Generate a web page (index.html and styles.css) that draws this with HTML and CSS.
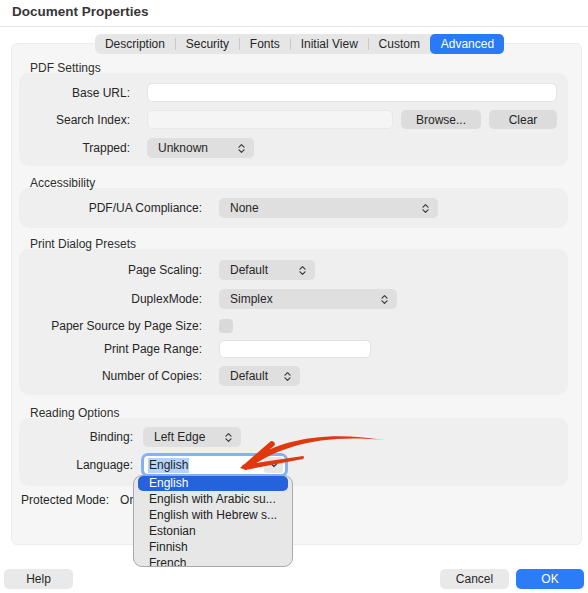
FILE: index.html
```html
<!DOCTYPE html>
<html>
<head>
<meta charset="utf-8">
<link rel="stylesheet" href="styles.css">
</head>
<body>
<div class="page">
  <header class="titlebar">Document Properties</header>

  <nav class="tabs-wrap">
    <div class="tabs">
      <span class="tab">Description</span>
      <span class="tab sep">Security</span>
      <span class="tab sep">Fonts</span>
      <span class="tab sep">Initial View</span>
      <span class="tab sep">Custom</span>
      <span class="tab active">Advanced</span>
    </div>
  </nav>

  <main class="panel">
    <div class="sec-title">PDF Settings</div>
    <section class="group g1">
      <div class="row">
        <label class="lbl">Base URL:</label>
        <div class="field white grow"></div>
      </div>
      <div class="row mt8">
        <label class="lbl">Search Index:</label>
        <div class="field dim w246"></div>
        <button class="btn w80">Browse...</button>
        <button class="btn w68">Clear</button>
      </div>
      <div class="row mt9">
        <label class="lbl">Trapped:</label>
        <div class="select w107"><span>Unknown</span><svg class="updown" viewBox="0 0 7 11"><path d="M1 4.2 3.5 1.6 6 4.2M1 6.8 3.5 9.4 6 6.8"/></svg></div>
      </div>
    </section>

    <div class="sec-title t2">Accessibility</div>
    <section class="group g2">
      <div class="row">
        <label class="lbl">PDF/UA Compliance:</label>
        <div class="select w219"><span>None</span><svg class="updown" viewBox="0 0 7 11"><path d="M1 4.2 3.5 1.6 6 4.2M1 6.8 3.5 9.4 6 6.8"/></svg></div>
      </div>
    </section>

    <div class="sec-title t3">Print Dialog Presets</div>
    <section class="group g3">
      <div class="row">
        <label class="lbl">Page Scaling:</label>
        <div class="select w96"><span>Default</span><svg class="updown" viewBox="0 0 7 11"><path d="M1 4.2 3.5 1.6 6 4.2M1 6.8 3.5 9.4 6 6.8"/></svg></div>
      </div>
      <div class="row mt9">
        <label class="lbl">DuplexMode:</label>
        <div class="select w178"><span>Simplex</span><svg class="updown" viewBox="0 0 7 11"><path d="M1 4.2 3.5 1.6 6 4.2M1 6.8 3.5 9.4 6 6.8"/></svg></div>
      </div>
      <div class="row mt8 h18">
        <label class="lbl">Paper Source by Page Size:</label>
        <div class="checkbox"></div>
      </div>
      <div class="row mt5 h18">
        <label class="lbl">Print Page Range:</label>
        <div class="field white w152 h18"></div>
      </div>
      <div class="row mt8">
        <label class="lbl">Number of Copies:</label>
        <div class="select w81"><span>Default</span><svg class="updown" viewBox="0 0 7 11"><path d="M1 4.2 3.5 1.6 6 4.2M1 6.8 3.5 9.4 6 6.8"/></svg></div>
      </div>
    </section>

    <div class="sec-title t4">Reading Options</div>
    <section class="group g4">
      <div class="row">
        <label class="lbl">Binding:</label>
        <div class="select w98"><span>Left Edge</span><svg class="updown" viewBox="0 0 7 11"><path d="M1 4.2 3.5 1.6 6 4.2M1 6.8 3.5 9.4 6 6.8"/></svg></div>
      </div>
      <div class="row mt9 h18">
        <label class="lbl">Language:</label>
        <div class="combo">
          <span class="seltext">English</span>
          <span class="combo-btn"><svg viewBox="0 0 8 6"><path d="M1 1.5 4 4.5 7 1.5"/></svg></span>
          <ul class="menu">
            <li class="hl">English</li>
            <li>English with Arabic su...</li>
            <li>English with Hebrew s...</li>
            <li>Estonian</li>
            <li>Finnish</li>
            <li>French</li>
          </ul>
        </div>
      </div>
    </section>

    <div class="protected"><span>Protected Mode:</span><span class="on">On</span></div>
  </main>

  <footer class="bottom">
    <button class="fbtn">Help</button>
    <div class="right">
      <button class="fbtn">Cancel</button>
      <button class="fbtn primary">OK</button>
    </div>
  </footer>

  <svg class="arrow" viewBox="0 0 588 593" width="588" height="593">
    <path d="M243 467 C264 446 312 428 384 440 C312 433 272 451 246 470 Z"/>
    <path d="M240 468 L271 441 Q275 441 275 445 L246 470 Z"/>
    <path d="M242 465 L303 456 Q305 457 303 459 L245 470 Z"/>
  </svg>
</div>
</body>
</html>
```

FILE: styles.css
```css
* { box-sizing: border-box; }
html, body { margin: 0; padding: 0; background: #ffffff; }
body {
  font-family: "Liberation Sans", Arial, sans-serif;
  font-size: 12px;
  color: #262626;
}
.page { position: relative; width: 588px; height: 593px; overflow: hidden; }

.titlebar {
  height: 27px;
  padding: 4px 0 0 12px;
  font-size: 13.5px;
  font-weight: bold;
  color: #363636;
  border-bottom: 1px solid #e4e4e4;
  line-height: 16px;
}

.tabs-wrap {
  display: flex;
  justify-content: center;
  margin: 7px 0 0 14px;
  width: 571px;
  position: relative;
  z-index: 2;
}
.tabs {
  display: flex;
  height: 20px;
  background: #e6e6e6;
  border-radius: 6px;
}
.tab {
  position: relative;
  padding: 0 10.4px;
  line-height: 20px;
  color: #262626;
}
.tab.sep::before {
  content: "";
  position: absolute;
  left: 0;
  top: 4px;
  width: 1px;
  height: 12px;
  background: #c9c9c9;
}
.tab.active {
  background: #2a7af5;
  color: #ffffff;
  border-radius: 5px;
}

.panel {
  position: relative;
  z-index: 1;
  margin: -11px 0 0 11px;
  width: 571px;
  height: 502px;
  background: #f6f6f6;
  border: 1px solid #ececec;
  border-radius: 6px;
  padding: 16px 13px 0 7px;
}

.sec-title {
  height: 13px;
  line-height: 17px;
  padding-left: 11px;
  color: #2e2e2e;
}
.t2 { margin-top: 9px; }
.t3 { margin-top: 8px; }
.t4 { margin-top: 10px; }

.group {
  background: #efefef;
  border-radius: 10px;
  padding-right: 11px;
}
.g1 { padding-top: 10px; padding-bottom: 8px; }
.g2 { padding-top: 10px; padding-bottom: 10px; }
.g3 { padding-top: 11px; padding-bottom: 9px; }
.g4 { padding-top: 9px; padding-bottom: 12px; }

.row {
  display: flex;
  align-items: center;
  gap: 8px;
  min-height: 19px;
}
.h18 { height: 18px; min-height: 18px; }
.mt5 { margin-top: 5px; }
.mt8 { margin-top: 8px; }
.mt9 { margin-top: 9px; }

.lbl {
  flex: none;
  text-align: right;
  margin-right: 9px;
  white-space: nowrap;
}
.g1 .lbl { width: 111px; }
.g2 .lbl, .g3 .lbl { width: 183px; }
.g4 .lbl { width: 114px; margin-right: 2px; }

.field {
  height: 19px;
  border-radius: 5px;
  border: 1px solid #e3e3e3;
}
.field.white { background: #ffffff; }
.field.dim { background: #f5f5f5; border-color: #e8e8e8; }
.grow { flex: 1; }
.w246 { width: 246px; flex: none; }
.w152 { width: 152px; flex: none; }
.field.h18 { height: 18px; }

.btn {
  height: 19px;
  border: none;
  border-radius: 5px;
  background: #dcdcdc;
  font: inherit;
  color: #262626;
  padding: 0;
}
.w80 { width: 80px; }
.w68 { width: 68px; }

.select {
  flex: none;
  height: 20px;
  background: #dfdfdf;
  border-radius: 5px;
  display: flex;
  align-items: center;
  justify-content: space-between;
  padding: 0 9px 0 11px;
}
.w107 { width: 107px; }
.w219 { width: 219px; }
.w96 { width: 96px; }
.w178 { width: 178px; }
.w81 { width: 81px; }
.w98 { width: 98px; }
.updown { width: 7px; height: 11px; }
.updown path, .combo-btn path {
  fill: none;
  stroke: #3a3a3a;
  stroke-width: 1.2;
  stroke-linecap: round;
  stroke-linejoin: round;
}

.checkbox {
  width: 14px;
  height: 14px;
  border-radius: 4px;
  background: #d9d9d9;
}

.combo {
  position: relative;
  margin-left: 1px;
  width: 141px;
  height: 18px;
  background: #ffffff;
  border-radius: 4px;
  box-shadow: 0 0 0 3px #86b0f2;
  display: flex;
  align-items: center;
  padding-left: 4px;
}
.seltext {
  background: #b5d4fb;
  padding: 0 1px;
  line-height: 15px;
  color: #1e1e1e;
}
.combo-btn {
  position: absolute;
  right: 2px;
  top: 1px;
  width: 19px;
  height: 16px;
  border-radius: 3px;
  background: #e6e6e6;
  display: flex;
  align-items: center;
  justify-content: center;
}
.combo-btn svg { width: 8px; height: 6px; }

.menu {
  position: absolute;
  left: -11px;
  top: 19px;
  width: 160px;
  height: 92px;
  margin: 0;
  padding: 0 4px;
  list-style: none;
  background: #e7e7e7;
  border: 1px solid #a9a9a9;
  border-radius: 9px;
  overflow: hidden;
  z-index: 5;
}
.menu li {
  height: 16px;
  line-height: 16px;
  padding-left: 11px;
  color: #222222;
  white-space: nowrap;
}
.menu li.hl {
  height: 15px;
  line-height: 15px;
  background: #2463da;
  color: #ffffff;
  border-radius: 5px;
}

.protected {
  margin-top: 7px;
  padding-left: 2px;
  line-height: 14px;
  display: flex;
}
.protected .on { margin-left: 11px; }

.bottom {
  display: flex;
  justify-content: space-between;
  margin-top: 24px;
  padding: 0 4px;
}
.right { display: flex; gap: 7px; }
.fbtn {
  height: 20px;
  width: 69px;
  border: none;
  border-radius: 5px;
  background: #e9e9e9;
  font: inherit;
  color: #262626;
  padding: 0;
}
.fbtn.primary { width: 68px; background: #2b7cf6; color: #ffffff; }

.arrow {
  position: absolute;
  left: 0;
  top: 0;
  z-index: 10;
  pointer-events: none;
}
.arrow path { fill: #e0380f; }
```
